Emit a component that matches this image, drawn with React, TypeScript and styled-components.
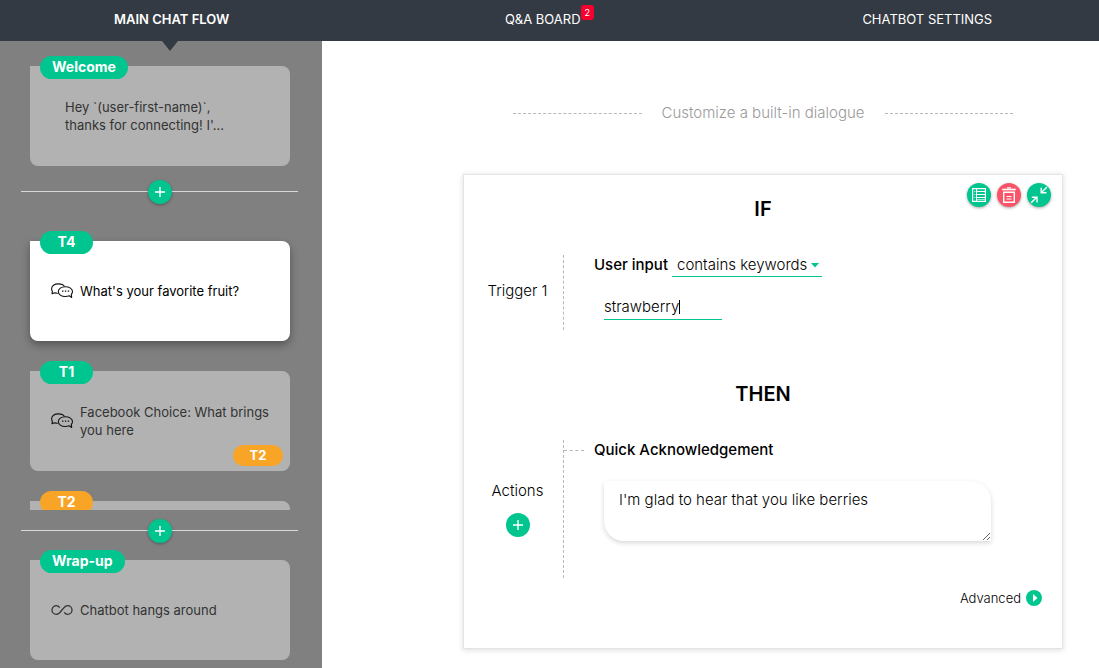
import React from "react";
import styled, { createGlobalStyle, css } from "styled-components";

const green = "#00c58e";
const orange = "#f8a527";
const navy = "#343a43";

const GlobalStyle = createGlobalStyle`
  *, *::before, *::after { box-sizing: border-box; }
  body {
    margin: 0;
    background: #fff;
    color: #000;
    font-family: Inter, "Open Sans", sans-serif;
    font-size: 15px;
    line-height: 20px;
  }
  button, input, select, textarea { font: inherit; color: inherit; }
  h1, h2, h3, p { margin: 0; }
`;

const Shell = styled.div`
  display: flex;
  flex-direction: column;
  height: 100vh;
`;

const TopNav = styled.nav`
  display: grid;
  grid-template-columns: 5fr 6fr 5fr;
  flex: none;
  background: ${navy};
`;

const NavLink = styled.a<{ $active?: boolean }>`
  position: relative;
  display: flex;
  justify-content: center;
  padding: 9px 0 12px;
  color: #fff;
  font-size: 13px;
  font-weight: ${(p) => (p.$active ? 600 : 400)};
  text-decoration: none;
  ${(p) =>
    p.$active &&
    css`
      &::after {
        content: "";
        position: absolute;
        z-index: 1;
        top: 100%;
        left: calc(50% - 10px);
        border: 8px solid transparent;
        border-top: 10px solid ${navy};
        border-bottom: 0;
      }
    `}
`;

const Badge = styled.span`
  align-self: flex-start;
  margin: -4px 0;
  padding: 0 4px;
  border-radius: 3px;
  background: #f5002f;
  font-size: 9px;
  line-height: 15px;
`;

const Body = styled.div`
  display: flex;
  flex: 1;
  min-height: 0;
`;

const Sidebar = styled.aside`
  display: flex;
  flex-direction: column;
  flex: none;
  width: 322px;
  padding: 25px 0 8px;
  background: #808080;
`;

const TriggerList = styled.div`
  display: flex;
  flex: 1;
  flex-direction: column;
  gap: 30px;
  min-height: 0;
  padding-top: 25px;
  overflow: hidden;
`;

const FlowCard = styled.article<{ $active?: boolean }>`
  position: relative;
  display: flex;
  flex: none;
  align-items: center;
  gap: 6px;
  height: 100px;
  margin: 0 32px 0 30px;
  padding: 0 20px 0 21px;
  border-radius: 0 8px 8px 8px;
  background: ${(p) => (p.$active ? "#fff" : "#b2b2b2")};
  color: ${(p) => (p.$active ? "#000" : "#333")};
  box-shadow: ${(p) => (p.$active ? "0 4px 8px rgba(0, 0, 0, 0.35)" : "none")};
`;

const CardText = styled.p<{ $indent?: boolean }>`
  padding-left: ${(p) => (p.$indent ? 14 : 0)}px;
  font-size: 13px;
  line-height: 18px;
  white-space: nowrap;
`;

const CardTag = styled.h3<{ $warn?: boolean }>`
  position: absolute;
  top: -10px;
  left: 10px;
  min-width: 53px;
  padding: 0 12px 2px;
  border-radius: 12px;
  background: ${(p) => (p.$warn ? orange : green)};
  color: #fff;
  font-size: 14px;
  font-weight: 700;
  line-height: 21px;
  text-align: center;
`;

const NextTag = styled.span`
  position: absolute;
  right: 7px;
  bottom: 5px;
  width: 50px;
  border-radius: 11px;
  background: ${orange};
  color: #fff;
  font-size: 13px;
  font-weight: 700;
  line-height: 21px;
  text-align: center;
`;

const AddRow = styled.div<{ $last?: boolean }>`
  display: flex;
  flex: none;
  align-items: center;
  margin: 0 24px 0 21px;
  padding: ${(p) => (p.$last ? "9px 0 17px" : "14px 0 12px")};
  &::before, &::after {
    content: "";
    flex: 1;
    height: 1px;
    margin-bottom: 1px;
    background: #d8d8d8;
  }
`;

const RoundButton = styled.button<{ $danger?: boolean; $flat?: boolean }>`
  display: grid;
  place-items: center;
  flex: none;
  width: 24px;
  height: 24px;
  padding: 0;
  border: 0;
  border-radius: 50%;
  background: ${(p) => (p.$danger ? "#fb5468" : green)};
  box-shadow: ${(p) => (p.$flat ? "none" : "0 1px 3px rgba(0, 0, 0, 0.35)")};
  color: #fff;
  cursor: pointer;
`;

const Main = styled.main`
  flex: 1;
  min-width: 0;
  padding: 60px 36px 18px 141px;
  overflow-y: auto;
`;

const Divider = styled.header`
  display: flex;
  align-items: center;
  gap: 20px;
  padding: 0 50px;
  margin-bottom: 49px;
  &::before, &::after {
    content: "";
    flex: 1;
    border-top: 1px dashed #b8b8b8;
  }
`;

const DividerTitle = styled.h1`
  color: #999;
  font-size: 15px;
  font-weight: 300;
  line-height: 24px;
`;

const Panel = styled.section`
  border: 1px solid #e4e4e4;
  box-shadow: 0 1px 6px rgba(0, 0, 0, 0.14);
`;

const PanelHead = styled.div`
  display: grid;
  grid-template-columns: 1fr auto 1fr;
  padding: 8px 11px 31px;
`;

const ThenHead = styled(PanelHead)`
  padding-top: 38px;
`;

const Heading = styled.h2`
  grid-column: 2;
  padding-top: 11px;
  font-size: 20px;
  font-weight: 600;
  line-height: 30px;
`;

const Tools = styled.div`
  display: flex;
  justify-content: flex-end;
  gap: 6px;
`;

const Rule = styled.div`
  display: flex;
  padding-left: 10px;
`;

const RuleLabel = styled.div`
  display: flex;
  flex: none;
  flex-direction: column;
  align-items: center;
  justify-content: center;
  gap: 12px;
  width: 89px;
  padding-right: 2px;
  font-weight: 300;
`;

const TriggerLabel = styled(RuleLabel)`
  padding-bottom: 3px;
`;

const RuleBody = styled.div<{ $tall?: boolean }>`
  flex: 1;
  min-width: 0;
  min-height: ${(p) => (p.$tall ? 138 : 75)}px;
  padding-left: 30px;
  border-left: 1px dashed #b8b8b8;
`;

const Condition = styled.div`
  display: flex;
  align-items: flex-start;
  gap: 4px;
`;

const FieldLabel = styled.label`
  font-weight: 500;
`;

const SelectBox = styled.div`
  position: relative;
  width: 150px;
  border-bottom: 1px solid ${green};
  svg {
    position: absolute;
    top: 8px;
    right: 3px;
    pointer-events: none;
  }
`;

const Select = styled.select`
  display: block;
  width: 100%;
  height: 21px;
  padding: 0 12px 1px 5px;
  border: 0;
  background: transparent;
  appearance: none;
  font-weight: 300;
  line-height: 20px;
  outline: 0;
`;

const KeywordBox = styled.div`
  display: flex;
  align-items: center;
  width: 118px;
  margin: 20px 0 0 10px;
  padding-bottom: 2px;
  border-bottom: 1px solid ${green};
`;

const KeywordInput = styled.input`
  field-sizing: content;
  max-width: 110px;
  height: 20px;
  padding: 0;
  border: 0;
  background: transparent;
  caret-color: transparent;
  font-weight: 300;
  outline: 0;
`;

const Caret = styled.span`
  width: 1px;
  height: 14px;
  background: #000;
`;

const ActionTitle = styled.div`
  display: flex;
  align-items: center;
  gap: 10px;
  margin-left: -30px;
  &::before {
    content: "";
    width: 20px;
    border-top: 1px dashed #b8b8b8;
  }
`;

const Message = styled.textarea`
  display: block;
  width: calc(100% - 81px);
  height: 60px;
  margin: 21px 0 0 10px;
  padding: 9px 15px;
  border: 0;
  border-radius: 4px 20px 0 20px;
  background: #fff;
  box-shadow: 0 2px 5px rgba(0, 0, 0, 0.16);
  font-weight: 300;
  line-height: 20px;
  outline: 0;
  resize: both;
`;

const Advanced = styled.button`
  display: flex;
  align-items: center;
  gap: 5px;
  margin: 10px 20px 40px auto;
  padding: 0;
  border: 0;
  background: none;
  font-size: 13px;
  font-weight: 300;
  cursor: pointer;
`;

const PlusIcon = () => (
  <svg width="12" height="12" viewBox="0 0 12 12" fill="none" stroke="currentColor" strokeWidth="1.4">
    <path d="M6 1v10M1 6h10" />
  </svg>
);

const ChatIcon = () => (
  <svg width="23" height="16" viewBox="0 0 23 16" fill="none" stroke="#111" strokeWidth="1.1" strokeLinejoin="round">
    <path d="M6.800 10.200c-1.200.1-2.200-.1-3.200-.5L1 10.800l.4-2.500C.8 7.500.6 6.700.6 5.700.6 3 3.500.9 7.200.9c3 0 5.500 1.100 6.300 2.700" />
    <path d="M14.300 3.700c-4 0-7 2.100-7 4.900s3 4.900 7 4.900c1.500 0 2.800-.2 3.900-.7l2.500 1.700-.4-3c.8-.8 1.200-1.800 1.200-2.900 0-2.800-3.200-4.900-7.200-4.900z" />
    <path d="M11 8.200h1.400M13.900 8.200h1.400M16.800 8.200h1.400" strokeWidth="1.300" />
  </svg>
);

const InfinityIcon = () => (
  <svg width="23" height="12" viewBox="0 0 23 12" fill="none" stroke="#333" strokeWidth="1.300">
    <path d="M8.800 3.700C7.700 2.300 6.800 1.600 5.400 1.600 3 1.600 1 3.500 1 6s2 4.400 4.400 4.400c2.600 0 3.800-2 5.600-4.400s3.200-4.400 5.700-4.400C19.100 1.600 21 3.500 21 6s-1.900 4.400-4.300 4.400c-1.400 0-2.500-.7-3.500-2.100" />
  </svg>
);

const TableIcon = () => (
  <svg width="14" height="14" viewBox="0 0 14 14" fill="none" stroke="currentColor">
    <path d="M.6.6h12.800v12.800H.6z" strokeWidth="1.200" />
    <path d="M4.500.5v13M4.500 3.500h9M4.500 6.500h9M4.500 9.500h9" />
    <path d="M2 3.500h1.500M2 6.500h1.500M2 9.500h1.500M4.500 11.500h9" strokeOpacity=".6" />
  </svg>
);

const TrashIcon = () => (
  <svg width="14" height="16" viewBox="0 0 14 16" fill="none" stroke="currentColor">
    <path d="M.3 2.500h13.400" strokeWidth="1.600" />
    <path d="M5 1h4" strokeWidth="1.400" />
    <path d="M1.700 5.200h10.600v10H1.700z" strokeWidth="1.400" />
    <path d="M4.500 9.500h5M4.500 12h5" />
  </svg>
);

const CollapseIcon = () => (
  <svg width="18" height="18" viewBox="0 0 18 18" fill="none" stroke="currentColor" strokeWidth="1.400">
    <path d="M17 1 11.500 6.500M11.200 1.800v5h5.300M1.200 16.800l5.500-5.500M1.800 11.200h5.200v5.300" />
  </svg>
);

const ArrowDown = () => (
  <svg width="8" height="5" viewBox="0 0 8 5" fill={green}>
    <path d="M0 0h8L4 4.500z" />
  </svg>
);

const PlayIcon = () => (
  <svg width="16" height="16" viewBox="0 0 16 16">
    <circle cx="8" cy="8" r="8" fill={green} />
    <path d="M7 4v8l4.500-4z" fill="#fff" />
  </svg>
);

export default function App() {
  return (
    <Shell>
      <GlobalStyle />
      <TopNav>
        <NavLink href="#flow" $active>MAIN CHAT FLOW</NavLink>
        <NavLink href="#board">Q&amp;A BOARD<Badge>2</Badge></NavLink>
        <NavLink href="#settings">CHATBOT SETTINGS</NavLink>
      </TopNav>
      <Body>
        <Sidebar>
          <FlowCard>
            <CardTag>Welcome</CardTag>
            <CardText $indent>
              Hey `(user-first-name)`,<br />thanks for connecting! I'...
            </CardText>
          </FlowCard>
          <AddRow>
            <RoundButton aria-label="Add trigger"><PlusIcon /></RoundButton>
          </AddRow>
          <TriggerList>
            <FlowCard $active>
              <CardTag>T4</CardTag>
              <ChatIcon />
              <CardText>What's your favorite fruit?</CardText>
            </FlowCard>
            <FlowCard>
              <CardTag>T1</CardTag>
              <ChatIcon />
              <CardText>Facebook Choice: What brings<br />you here</CardText>
              <NextTag>T2</NextTag>
            </FlowCard>
            <FlowCard>
              <CardTag $warn>T2</CardTag>
            </FlowCard>
          </TriggerList>
          <AddRow $last>
            <RoundButton aria-label="Add closing step"><PlusIcon /></RoundButton>
          </AddRow>
          <FlowCard>
            <CardTag>Wrap-up</CardTag>
            <InfinityIcon />
            <CardText>Chatbot hangs around</CardText>
          </FlowCard>
        </Sidebar>
        <Main>
          <Divider><DividerTitle>Customize a built-in dialogue</DividerTitle></Divider>
          <Panel>
            <PanelHead>
              <Heading>IF</Heading>
              <Tools>
                <RoundButton aria-label="Table view"><TableIcon /></RoundButton>
                <RoundButton aria-label="Delete" $danger><TrashIcon /></RoundButton>
                <RoundButton aria-label="Collapse"><CollapseIcon /></RoundButton>
              </Tools>
            </PanelHead>
            <Rule>
              <TriggerLabel>Trigger 1</TriggerLabel>
              <RuleBody>
                <Condition>
                  <FieldLabel htmlFor="match">User input</FieldLabel>
                  <SelectBox>
                    <Select id="match" defaultValue="contains keywords">
                      <option>contains keywords</option>
                    </Select>
                    <ArrowDown />
                  </SelectBox>
                </Condition>
                <KeywordBox>
                  <KeywordInput aria-label="Keyword" defaultValue="strawberry" />
                  <Caret />
                </KeywordBox>
              </RuleBody>
            </Rule>
            <ThenHead><Heading>THEN</Heading></ThenHead>
            <Rule>
              <RuleLabel>
                Actions
                <RoundButton aria-label="Add action" $flat><PlusIcon /></RoundButton>
              </RuleLabel>
              <RuleBody $tall>
                <ActionTitle><FieldLabel htmlFor="message">Quick Acknowledgement</FieldLabel></ActionTitle>
                <Message id="message" defaultValue="I'm glad to hear that you like berries" />
              </RuleBody>
            </Rule>
            <Advanced>Advanced <PlayIcon /></Advanced>
          </Panel>
        </Main>
      </Body>
    </Shell>
  );
}
